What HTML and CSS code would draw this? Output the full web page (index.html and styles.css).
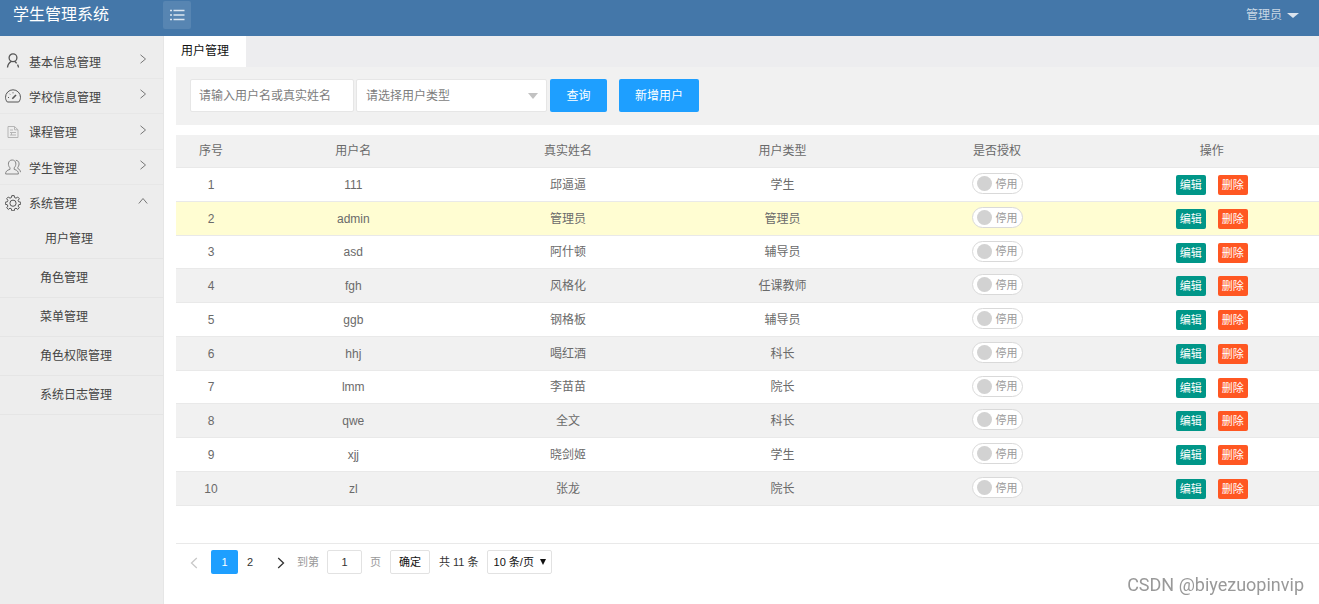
FILE: index.html
```html
<!DOCTYPE html>
<html lang="zh-CN">
<head>
<meta charset="utf-8">
<title>学生管理系统</title>
<link rel="stylesheet" href="styles.css">
</head>
<body>
<header class="topbar">
  <h1 class="brand">学生管理系统</h1>
  <button class="menu-toggle" type="button" aria-label="菜单">
    <svg width="16" height="12" viewBox="0 0 16 12" fill="none" stroke="currentColor" stroke-width="1.3"><path d="M4.500 1.500h11M4.500 6h11M4.500 10.500h11M1 1.500h2M1 6h2M1 10.500h2"/></svg>
  </button>
  <button class="account" type="button">管理员<span class="caret"></span></button>
</header>
<div class="layout">
  <nav class="sidebar">
    <a class="nav-item" href="#"><svg class="nav-icon bold" viewBox="0 0 16 16"><circle cx="8" cy="4.800" r="3.900"/><path d="M6.300 8.300C4 9.500 2.800 11.500 2.500 14.500M9.500 8.300c1 .7 1.600 1.300 2.100 2.100M12.500 11.600c.6 1 .9 1.800 1 2.900"/></svg><span>基本信息管理</span><svg class="chevron" viewBox="0 0 10 10"><path d="M2.500 .8L7.500 5 2.500 9.200"/></svg></a>
    <a class="nav-item" href="#"><svg class="nav-icon" viewBox="0 0 16 16"><path d="M2.300 14h11.400c1.200-1.500 1.800-3 1.800-4.700a7.500 7.500 0 0 0-15 0c0 1.700.6 3.200 1.800 4.700z"/><path class="needle" d="M7.300 10.700l3.700-3.700"/><path d="M3 9.500h1M4.500 5.800l.6.600M8 4.300v1"/></svg><span>学校信息管理</span><svg class="chevron" viewBox="0 0 10 10"><path d="M2.500 .8L7.500 5 2.500 9.200"/></svg></a>
    <a class="nav-item" href="#"><svg class="nav-icon pale" viewBox="0 0 16 16"><path d="M3 2.500h6.500l3.500 3.300v7.700H3zM9.500 2.500v3.300H13M5 6h3M5 8.500h6M5 11h6M6.500 8.500V11"/></svg><span>课程管理</span><svg class="chevron" viewBox="0 0 10 10"><path d="M2.500 .8L7.500 5 2.500 9.200"/></svg></a>
    <a class="nav-item" href="#"><svg class="nav-icon mid" viewBox="0 0 16 16"><path d="M.6 15h12.800c0-2.500-1-3.800-4.200-4.600v-1.600c2.600-2.400 2.300-7.800-2-7.800s-4.800 5.400-2.200 7.800v1.600C1.800 11.200.6 12.500.6 15zM10.800 1.300c3.500.2 4.200 4.200 2 7v1.200c1.800.8 2.500 1.800 2.700 3.700"/></svg><span>学生管理</span><svg class="chevron" viewBox="0 0 10 10"><path d="M2.500 .8L7.500 5 2.500 9.200"/></svg></a>
    <a class="nav-item open" href="#"><svg class="nav-icon" viewBox="0 0 16 16"><path d="M6.800.6h2.400l.4 2 1.400.6 1.700-1.200 1.600 1.700-1.200 1.700.6 1.400 2 .4v2.100l-2 .4-.6 1.400 1.200 1.700-1.600 1.600-1.700-1.200-1.400.6-.4 2H6.800l-.4-2-1.400-.6-1.700 1.200-1.600-1.600 1.200-1.700-.6-1.400-2-.4V7.200l2-.4.600-1.400-1.200-1.700L3.300 2 5 3.200l1.400-.6z"/><circle cx="8" cy="8.200" r="3.100"/></svg><span>系统管理</span><svg class="chevron" viewBox="0 0 10 10"><path d="M.8 7.500L5 2.500 9.200 7.500"/></svg></a>
    <div class="subnav">
      <a class="current" href="#">用户管理</a>
      <a href="#">角色管理</a>
      <a href="#">菜单管理</a>
      <a href="#">角色权限管理</a>
      <a href="#">系统日志管理</a>
    </div>
  </nav>
  <main class="main">
    <div class="tabs"><a class="tab" href="#">用户管理</a></div>
    <div class="content">
      <form class="filters">
        <input class="field" type="text" aria-label="用户名或真实姓名" placeholder="请输入用户名或真实姓名">
        <span class="select-wrap"><select class="field" aria-label="用户类型"><option>请选择用户类型</option></select></span>
        <button class="btn" type="button">查询</button>
        <button class="btn add" type="button">新增用户</button>
      </form>
      <table class="users">
        <thead><tr><th class="num">序号</th><th>用户名</th><th>真实姓名</th><th>用户类型</th><th>是否授权</th><th>操作</th></tr></thead>
        <tbody>
          <tr><td>1</td><td>111</td><td>邱逼逼</td><td>学生</td><td><label class="switch"><input type="checkbox">停用</label></td><td><div class="ops"><button class="edit" type="button">编辑</button><button class="del" type="button">删除</button></div></td></tr>
          <tr class="hover"><td>2</td><td>admin</td><td>管理员</td><td>管理员</td><td><label class="switch"><input type="checkbox">停用</label></td><td><div class="ops"><button class="edit" type="button">编辑</button><button class="del" type="button">删除</button></div></td></tr>
          <tr><td>3</td><td>asd</td><td>阿什顿</td><td>辅导员</td><td><label class="switch"><input type="checkbox">停用</label></td><td><div class="ops"><button class="edit" type="button">编辑</button><button class="del" type="button">删除</button></div></td></tr>
          <tr><td>4</td><td>fgh</td><td>风格化</td><td>任课教师</td><td><label class="switch"><input type="checkbox">停用</label></td><td><div class="ops"><button class="edit" type="button">编辑</button><button class="del" type="button">删除</button></div></td></tr>
          <tr><td>5</td><td>ggb</td><td>钢格板</td><td>辅导员</td><td><label class="switch"><input type="checkbox">停用</label></td><td><div class="ops"><button class="edit" type="button">编辑</button><button class="del" type="button">删除</button></div></td></tr>
          <tr><td>6</td><td>hhj</td><td>喝红酒</td><td>科长</td><td><label class="switch"><input type="checkbox">停用</label></td><td><div class="ops"><button class="edit" type="button">编辑</button><button class="del" type="button">删除</button></div></td></tr>
          <tr><td>7</td><td>lmm</td><td>李苗苗</td><td>院长</td><td><label class="switch"><input type="checkbox">停用</label></td><td><div class="ops"><button class="edit" type="button">编辑</button><button class="del" type="button">删除</button></div></td></tr>
          <tr><td>8</td><td>qwe</td><td>全文</td><td>科长</td><td><label class="switch"><input type="checkbox">停用</label></td><td><div class="ops"><button class="edit" type="button">编辑</button><button class="del" type="button">删除</button></div></td></tr>
          <tr><td>9</td><td>xjj</td><td>晓剑姬</td><td>学生</td><td><label class="switch"><input type="checkbox">停用</label></td><td><div class="ops"><button class="edit" type="button">编辑</button><button class="del" type="button">删除</button></div></td></tr>
          <tr><td>10</td><td>zl</td><td>张龙</td><td>院长</td><td><label class="switch"><input type="checkbox">停用</label></td><td><div class="ops"><button class="edit" type="button">编辑</button><button class="del" type="button">删除</button></div></td></tr>
        </tbody>
      </table>
      <div class="pager">
        <button class="page prev" type="button" aria-label="上一页"><svg class="arrow" viewBox="0 0 8 12"><path d="M6.800 1L1.500 6l5.300 5"/></svg></button>
        <button class="page active" type="button">1</button>
        <button class="page second" type="button">2</button>
        <button class="page next" type="button" aria-label="下一页"><svg class="arrow" viewBox="0 0 8 12"><path d="M1.200 1l5.300 5-5.300 5"/></svg></button>
        <label class="jump">到第<input type="text" value="1">页</label>
        <button class="confirm" type="button">确定</button>
        <span class="total">共 11 条</span>
        <span class="limit-wrap"><select class="limit" aria-label="每页条数"><option>10 条/页</option></select></span>
      </div>
    </div>
  </main>
</div>
<div class="watermark">CSDN @biyezuopinvip</div>
</body>
</html>
```

FILE: styles.css
```css
* { box-sizing: border-box; }
body {
  margin: 0;
  min-height: 100vh;
  display: flex;
  flex-direction: column;
  font: 12px/18px "Liberation Sans", "Noto Sans CJK SC", sans-serif;
  color: #6a6a6a;
  background: #fff;
}
button, input, select { font: inherit; color: inherit; margin: 0; }
button { border: 0; padding: 0; cursor: pointer; }
a { color: inherit; text-decoration: none; }

.topbar {
  display: flex;
  align-items: flex-start;
  height: 36px;
  padding-right: 20px;
  background: #4477a9;
  color: #fff;
}
.brand {
  width: 163px;
  margin: 0;
  padding: 3px 0 0 13px;
  font-size: 16px;
  line-height: 24px;
  font-weight: 400;
}
.menu-toggle {
  display: flex;
  align-items: center;
  justify-content: center;
  width: 28px;
  height: 28px;
  margin-top: 1px;
  border-radius: 2px;
  background: #5785b2;
  color: #dbe6f0;
}
.account {
  display: flex;
  align-items: center;
  gap: 5px;
  height: 30px;
  margin-left: auto;
  background: none;
  color: #c9d7e5;
}
.caret {
  border: 6px solid transparent;
  border-top: 5px solid #dbe4ee;
  border-bottom: 0;
}

.layout { display: flex; flex: 1; }
.sidebar {
  width: 164px;
  flex: none;
  padding-top: 8px;
  background: #ededed;
  border-right: 1px solid #e6e6e6;
  color: #444;
}
.nav-item {
  display: flex;
  align-items: center;
  height: 35px;
  padding: 0 15px 0 5px;
  border-bottom: 1px solid #e7e7e7;
}
.nav-item:nth-child(3) { height: 36px; }
.nav-item.open { border-bottom: 0; }
.nav-item span { padding-top: 3px; }
.nav-icon {
  width: 16px;
  height: 16px;
  margin-right: 8px;
  fill: none;
  stroke: #555;
}
.nav-icon.bold { stroke-width: 1.3; }
.nav-icon.pale { stroke: #b5b5b5; }
.nav-icon.mid { stroke: #858585; }
.needle { stroke-width: 1.6; }
.chevron {
  width: 10px;
  height: 10px;
  margin: 0 0 4px auto;
  fill: none;
  stroke: #777;
}
.subnav a {
  display: block;
  height: 39px;
  padding-left: 40px;
  line-height: 39px;
  border-bottom: 1px solid #e5e5e5;
}
.subnav .current { padding-left: 45px; }

.main { flex: 1; min-width: 0; }
.tabs { height: 31px; background: #ededef; display: flex; }
.tab {
  padding: 0 17px;
  line-height: 31px;
  background: #fff;
  color: #111;
}
.content { padding-left: 12px; }
.filters {
  display: flex;
  padding: 12px 14px 13px;
  background: #f1f1f1;
}
.field {
  width: 164px;
  height: 33px;
  padding: 0 8px;
  border: 1px solid #e6e6e6;
  border-radius: 2px;
  background: #fff;
  color: #7d7d7d;
}
.field::placeholder { color: #7d7d7d; opacity: 1; }
.select-wrap { position: relative; margin: 0 3px 0 2px; }
.select-wrap .field { width: 191px; appearance: none; padding-left: 9px; }
.select-wrap::after {
  content: "";
  position: absolute;
  right: 9px;
  top: 14px;
  border: 5px solid transparent;
  border-top: 6px solid #c2c2c2;
  border-bottom: 0;
  pointer-events: none;
}
.btn {
  height: 33px;
  min-width: 57px;
  padding: 0 16px;
  border-radius: 2px;
  background: #1e9fff;
  color: #fff;
}
.btn.add { margin-left: 12px; }

.users {
  width: 100%;
  margin-top: 10px;
  border-collapse: separate;
  border-spacing: 0;
  table-layout: fixed;
  text-align: center;
}
.users th, .users td {
  height: 34px;
  padding: 0;
  font-weight: 400;
  border-bottom: 1px solid #e9e9e9;
}
.users th, .users tr:nth-child(4n+3) td { height: 33px; }
.users .num { width: 70px; }
.users thead tr, .users tbody tr:nth-child(even) { background: #f1f1f1; }
.users tbody tr.hover { background: #fffdd2; }
.switch {
  display: flex;
  align-items: center;
  gap: 4px;
  width: 51px;
  height: 21px;
  margin: 0 auto 2px;
  padding-left: 4px;
  border: 1px solid #d9d9d9;
  border-radius: 11px;
  background: #fff;
  color: #999;
  font-size: 11px;
}
.switch input {
  appearance: none;
  width: 15px;
  height: 15px;
  border-radius: 50%;
  background: #d2d2d2;
}
.ops { display: flex; justify-content: center; gap: 12px; padding-top: 1px; }
.ops button {
  width: 30px;
  height: 20px;
  border-radius: 2px;
  color: #fff;
  font-size: 11px;
}
.ops .edit { background: #009688; }
.ops .del { background: #ff5722; }

.pager {
  display: flex;
  align-items: center;
  margin-top: 37px;
  padding: 6px 5px;
  border-top: 1px solid #e9e9e9;
  font-size: 11px;
  color: #333;
}
.page { width: 27px; height: 24px; border-radius: 2px; background: none; }
.page.active { background: #1e9fff; color: #fff; }
.page.prev { width: 30px; color: #c8c8c8; padding-right: 4px; }
.page.second { width: 24px; }
.page.next { width: 35px; padding-left: 2px; }
.arrow { width: 8px; height: 12px; fill: none; stroke: currentColor; stroke-width: 1.3; vertical-align: middle; }
.jump { display: flex; align-items: center; gap: 8px; color: #999; }
.jump input {
  width: 35px;
  height: 24px;
  text-align: center;
  color: #333;
}
.jump input, .confirm, .limit {
  border: 1px solid #e2e2e2;
  border-radius: 2px;
  background: #fff;
}
.confirm { width: 40px; height: 24px; margin: 0 9px; color: #111; }
.total { margin-right: 8px; }
.limit-wrap { position: relative; }
.limit { width: 65px; height: 24px; padding: 0 6px; appearance: none; color: #111; }
.limit-wrap::after {
  content: "";
  position: absolute;
  right: 6px;
  top: 9px;
  border: 3px solid transparent;
  border-top: 6px solid #111;
  border-bottom: 0;
  pointer-events: none;
}
.watermark {
  position: fixed;
  right: 15px;
  bottom: 8px;
  font-family: Roboto, "Liberation Sans", sans-serif;
  font-size: 18px;
  line-height: 22px;
  color: #999;
}
```
